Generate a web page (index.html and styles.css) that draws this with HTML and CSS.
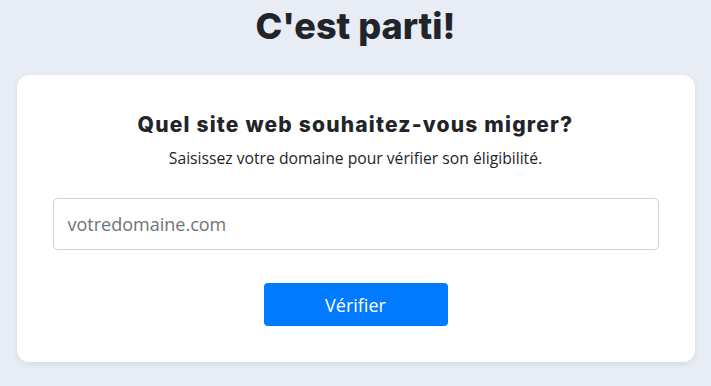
FILE: index.html
```html
<!DOCTYPE html>
<html lang="fr">
<head>
<meta charset="utf-8">
<title>C'est parti!</title>
<link rel="stylesheet" href="styles.css">
</head>
<body>
<h1 class="page-title">C'est parti!</h1>
<main class="card">
  <h2 class="card-title">Quel site web souhaitez-vous migrer?</h2>
  <p class="card-sub">Saisissez votre domaine pour vérifier son éligibilité.</p>
  <input class="domain-input" type="text" placeholder="votredomaine.com">
  <div class="actions">
    <button class="btn-verify" type="button">Vérifier</button>
  </div>
</main>
</body>
</html>
```
FILE: styles.css
```css
* { box-sizing: border-box; }
html, body { margin: 0; padding: 0; }
body {
  background: #e8ecf5;
  font-family: "Open Sans", "Noto Sans", sans-serif;
  color: #212529;
  height: 386px;
  overflow: hidden;
}
.page-title {
  margin: 0;
  padding-top: 4px;
  height: 75px;
  text-align: center;
  font-family: Inter, "DejaVu Sans", sans-serif;
  font-weight: 800;
  font-size: 36px;
  line-height: 44px;
  color: #212529;
}
.card {
  width: 678px;
  margin: 0 auto;
  background: #fff;
  border-radius: 12px;
  box-shadow: 0 2px 6px rgba(0, 0, 0, 0.08);
  padding: 36px 36px 36px;
  display: flex;
  flex-direction: column;
  align-items: stretch;
}
.card-title {
  margin: 0;
  text-align: center;
  font-family: Inter, "DejaVu Sans", sans-serif;
  font-weight: 800;
  font-size: 21px;
  letter-spacing: 1.2px;
  line-height: 28px;
  color: #212529;
}
.card-sub {
  margin: 8px 0 0;
  text-align: center;
  font-size: 15.7px;
  line-height: 22px;
  color: #212529;
}
.domain-input {
  margin-top: 29px;
  height: 52px;
  width: 100%;
  border: 1px solid #ced4da;
  border-radius: 5px;
  padding: 0 14px;
  font-family: "Open Sans", sans-serif;
  font-size: 18px;
  color: #495057;
  background: #fff;
  outline: none;
}
.domain-input::placeholder { color: #6c757d; }
.actions {
  margin-top: 33px;
  display: flex;
  justify-content: center;
}
.btn-verify {
  width: 184px;
  height: 43px;
  border: none;
  border-radius: 4px;
  background: #007bff;
  color: #fff;
  font-family: "Open Sans", sans-serif;
  font-size: 18px;
  cursor: pointer;
}
```
